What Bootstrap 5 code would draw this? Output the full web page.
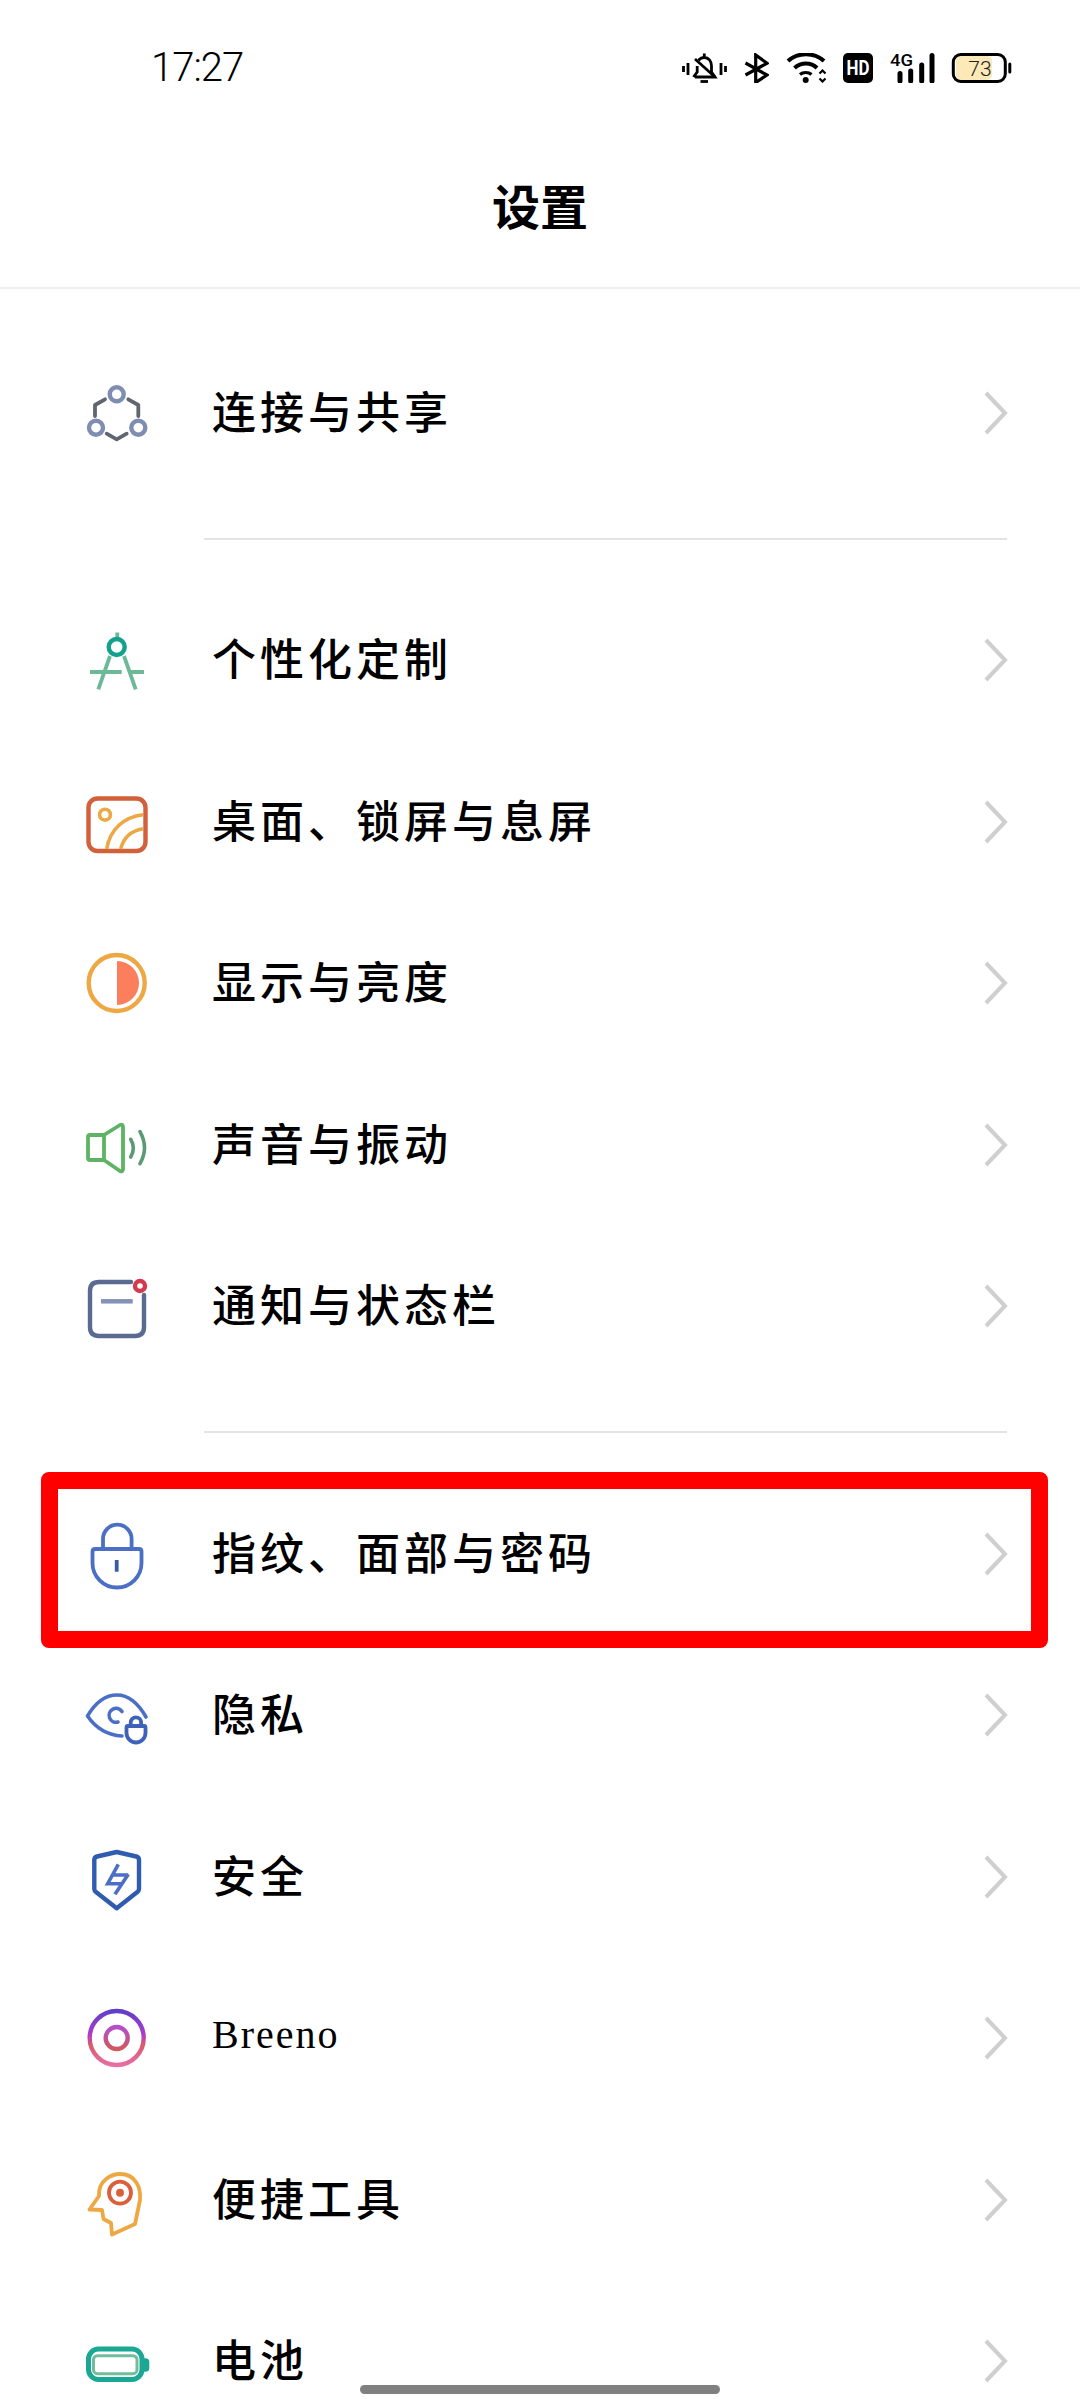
<!DOCTYPE html>
<html lang="zh-CN">
  <head>
    <meta charset="UTF-8" />
    <meta name="viewport" content="width=device-width, initial-scale=1.0" />
    <title>设置</title>
    <link
      rel="stylesheet"
      href="https://cdn.jsdelivr.net/npm/bootstrap@5.3.3/dist/css/bootstrap.min.css"
    />
    <style>
      body {
        background: #fff;
        color: #000;
        font-family: "Noto Sans CJK SC", sans-serif;
      }
      .phone-page {
        height: 2400px;
        overflow: hidden;
      }
      .page-head {
        height: 289px;
        border-bottom: 2px solid #f0f0f0;
      }
      .status-row {
        padding: 53px 68px 0 151px;
        height: 83px;
      }
      .status-time {
        font-family: Roboto, sans-serif;
        font-size: 40px;
        font-weight: 300;
        line-height: 30px;
        letter-spacing: -1px;
      }
      .status-icons {
        gap: 16px;
      }
      .page-title {
        font-size: 48px;
        font-weight: 700;
        line-height: 60px;
        margin: 91px 0 0;
      }
      .settings-list {
        padding-top: 43px;
        --bs-list-group-bg: transparent;
        --bs-list-group-border-width: 0;
      }
      .settings-item {
        height: 161.5px;
        padding: 0 72px 0 76px;
        color: #000;
      }
      .item-label {
        margin: 0 0 6px 56px;
        font-size: 44px;
        font-weight: 500;
        letter-spacing: 4px;
        line-height: 60px;
      }
      .item-latin {
        font-family: "Liberation Serif", serif;
        font-size: 40px;
        font-weight: 400;
        letter-spacing: 2px;
      }
      .item-rule {
        margin: 44px 73px 40px 204px;
        border-top: 2px solid #e3e3e3;
        opacity: 1;
      }
      .red-frame {
        position: absolute;
        left: 41px;
        top: -1px;
        width: 1007px;
        height: 176px;
        border: 17.5px solid #ff0000;
        border-radius: 8px;
      }
      .home-bar {
        position: absolute;
        left: 360px;
        top: 2385px;
        width: 360px;
        height: 9px;
        background: #808080;
        border-radius: 5px;
      }
      svg {
        display: block;
        flex-shrink: 0;
      }
      .ico {
        fill: none;
        stroke-width: 4.4;
        stroke-linecap: round;
        stroke-linejoin: round;
      }
      .chev {
        fill: none;
        stroke: #cfcfcf;
        stroke-width: 4;
      }
    </style>
    <script src="https://cdn.jsdelivr.net/npm/bootstrap@5.3.3/dist/js/bootstrap.bundle.min.js"></script>
  </head>

  <body>
    <div class="phone-page position-relative">
      <header class="page-head">
        <div class="status-row d-flex justify-content-between align-items-start">
          <span class="status-time">17:27</span>
          <div class="status-icons d-flex">
            <svg width="46" height="30" viewBox="0 0 46 30" fill="none" stroke="#000" stroke-width="2.8">
              <path d="M1.5 13v6M6 10v12M39 10v12M43.5 13v6" />
              <path d="M22.3 0.5v3M13 24h20l-3.5-5v-6c0-5-3-8.5-7.2-8.5-2.5 0-4.500 1.2-5.800 3M15.200 13v6L11.500 24" />
              <path d="M13 6l20 18" />
              <path d="M18.5 28.5h7.5" />
            </svg>
            <svg width="25" height="30" viewBox="0 0 25 30" fill="none" stroke="#000" stroke-width="3.2">
              <path d="M1.5 10L23 22L11.7 29.5V2L23 10.3L1.5 22" />
            </svg>
            <svg width="42" height="30" viewBox="0 0 42 30" fill="none" stroke="#000" stroke-width="4">
              <path d="M3 8C13 -1 29 -1 39 8" />
              <path d="M9.5 15C16 9 26 9 32 15" />
              <path d="M15 21.5C18 18.8 23.5 18.8 26.5 21.5" stroke-width="3.2" />
              <circle cx="20.7" cy="27" r="3" fill="#000" stroke="none" />
              <path d="M34.5 20.5l3-3 3 3M34.5 25.5l3 3 3-3" stroke-width="2.2" />
            </svg>
            <svg width="30" height="30" viewBox="0 0 30 30">
              <rect width="30" height="30" rx="5" fill="#000" />
              <text x="15" y="22" text-anchor="middle" textLength="23" lengthAdjust="spacingAndGlyphs" font-family="Roboto, sans-serif" font-weight="700" font-size="20" fill="#fff">HD</text>
            </svg>
            <svg width="46" height="30" viewBox="0 0 46 30">
              <text x="1" y="13" textLength="23" lengthAdjust="spacingAndGlyphs" font-family="Roboto, sans-serif" font-weight="500" font-size="16" fill="#000">4G</text>
              <path d="M11 20.5v7.5M21.7 18v10M32.7 12v16M43 2.5v25.5" stroke="#000" stroke-width="5" stroke-linecap="round" />
            </svg>
            <svg width="61" height="30" viewBox="0 0 61 30">
              <rect x="5" y="3" width="36" height="24" rx="5" fill="#fbe9b8" />
              <rect x="2.3" y="1.5" width="52" height="27" rx="7.5" fill="none" stroke="#000" stroke-width="3" />
              <rect x="57.3" y="9.5" width="3" height="11" rx="1.5" fill="#000" />
              <text x="29" y="22.5" text-anchor="middle" font-family="Roboto, sans-serif" font-weight="300" font-size="21" fill="#222">73</text>
            </svg>
          </div>
        </div>
        <h1 class="page-title text-center">设置</h1>
      </header>

      <div class="settings-list list-group list-group-flush" id="settingsList"></div>
      <div class="home-bar"></div>
    </div>

    <script>
      // icons drawn in an 80x80 box, row centre at y=40
      const icons = {
        link: `<g stroke="#5f6672" stroke-width="3.8"><path d="M29 26.3L19 32V43M52.3 26.3L62.3 32V43M30.7 60.7L40.7 66.3L50.7 60.7" /></g>
          <g stroke="#7f8db3"><circle cx="40.7" cy="21.3" r="7" /><circle cx="20" cy="54.7" r="7" /><circle cx="62.3" cy="54.7" r="7" /></g>`,
        compass: `<g stroke="#6cb997" stroke-width="3.8" stroke-linecap="butt"><path d="M41.3 12.5V18M34 36L22.3 69.3M48 36L59.7 69.3M14 52H45.7M52.3 52H68" /></g>
          <circle cx="40.7" cy="27" r="8" stroke="#13a08c" />`,
        wallpaper: `<rect x="12.5" y="16.5" width="57" height="52.5" rx="9" stroke="#d2603a" />
          <g stroke="#eda844" stroke-width="3.6" stroke-linecap="butt"><circle cx="29" cy="32.7" r="5.4" /><path d="M30.7 67C34 47 48 35 67 32.7M44.7 67C47 57 54 49 67 46.7" /></g>`,
        display: `<circle cx="40.7" cy="40" r="28" stroke="#eda844" />
          <path d="M41 18a22 22 0 0 1 0 44z" fill="#fb7f5c" />`,
        sound: `<path d="M14 30H28L44 20q3-1.500 3 2V64q0 3.500-3 2L28 55H14q-2 0-2-2V32q0-2 2-2zM28 30V55" stroke="#5eb365" stroke-width="3.8" />
          <path d="M54.7 34.300Q60 43 54.700 52M64 26.700Q73 43 64 58.700" stroke="#5a9a74" stroke-width="3.6" />`,
        notify: `<path d="M55 16H23q-9 0-9 9V61q0 9 9 9H59q9 0 9-9V29" stroke="#5a6a90" />
          <path d="M25 35.300H56.700" stroke="#8592b8" stroke-width="4.500" stroke-linecap="butt" />
          <circle cx="64" cy="20" r="5" stroke="#d43a4c" />`,
        lock: `<g stroke="#4a6fc4" stroke-width="3.800"><path d="M27 34V25a14.300 14.300 0 0 1 28.600 0V34" />
          <path d="M19.500 35H63q2.500 0 2.500 2.500V49a24.500 24.500 0 0 1-49 0V37.500q0-2.500 3-2.500z" /></g>
          <path d="M40.700 46V57.700" stroke="#3b5ba5" stroke-width="3.800" stroke-linecap="butt" />`,
        privacy: `<g stroke="#4a6fc4" stroke-width="3.600"><path d="M70 42C62 28 52 20 41 20C28 20 18 30 11.500 41C19 52 30 60 46 61" />
          <path d="M46 36.500A7 7 0 1 0 42 47" /></g>
          <g stroke="#3e62b8" stroke-width="3.800"><path d="M54.700 51V47.500a5.200 5.200 0 0 1 10.400 0V51" /><path d="M52 51H68a1.500 1.500 0 0 1 1.500 1.500V58a9.500 9.500 0 0 1-19 0V52.500A1.500 1.500 0 0 1 52 51z" /></g>`,
        shield: `<path d="M40.700 15L21 19.500q-2.700.700-2.700 3.500V52q0 2 2 3.300L40.700 71.300L61 55.300q2-1.300 2-3.300V23q0-2.800-2.700-3.500z" stroke="#2f5cb0" />
          <path d="M42.300 27.300L31.700 46.700H46.300M52.300 37.300L39 57.300M37.300 38H52.300" stroke="#4a6fc4" stroke-width="3.600" stroke-linecap="butt" stroke-linejoin="miter" />`,
        breeno: `<defs><linearGradient id="brA" gradientUnits="userSpaceOnUse" x1="0" y1="11" x2="0" y2="69"><stop offset="0" stop-color="#5a3fc8" /><stop offset=".45" stop-color="#b03ccc" /><stop offset=".6" stop-color="#d85a6a" /><stop offset="1" stop-color="#e870a8" /></linearGradient>
          <linearGradient id="brB" gradientUnits="userSpaceOnUse" x1="0" y1="28" x2="0" y2="52"><stop offset="0" stop-color="#b14fd0" /><stop offset="1" stop-color="#cf5a5a" /></linearGradient></defs>
          <circle cx="40.700" cy="40" r="27" stroke="url(#brA)" />
          <circle cx="40.700" cy="40" r="11" stroke="url(#brB)" />`,
        tools: `<path d="M13.500 49.500L23 36C22 20 36 14 44 14C60 14 65 28 64 40L59 64L36 74.500L35 63L27.500 59L26 50Z" stroke="#eda844" stroke-width="3.800" />
          <circle cx="44" cy="32.700" r="11" stroke="#d9603a" stroke-width="3.800" />
          <circle cx="44" cy="32.700" r="4" fill="#d9603a" />`,
        battery: `<rect x="12.500" y="28" width="53.500" height="30.500" rx="10" stroke="#1aa894" stroke-width="5" />
          <path d="M68 37.300h1.500q3.800 0 3.800 3.800v5.800q0 3.800-3.800 3.800H68z" fill="#1aa894" />
          <rect x="17.500" y="34.700" width="43.500" height="18" rx="4" stroke="#72bb9b" stroke-width="3" />`,
      };

      const items = [
        { name: "连接与共享", icon: "link", rule: true },
        { name: "个性化定制", icon: "compass" },
        { name: "桌面、锁屏与息屏", icon: "wallpaper" },
        { name: "显示与亮度", icon: "display" },
        { name: "声音与振动", icon: "sound" },
        { name: "通知与状态栏", icon: "notify", rule: true },
        { name: "指纹、面部与密码", icon: "lock", framed: true },
        { name: "隐私", icon: "privacy" },
        { name: "安全", icon: "shield" },
        { name: "Breeno", icon: "breeno", latin: true },
        { name: "便捷工具", icon: "tools" },
        { name: "电池", icon: "battery" },
      ];

      const settingsList = document.querySelector("#settingsList");

      for (let i = 0; i < items.length; i++) {
        const row = document.createElement("div");
        row.className = "settings-item list-group-item d-flex align-items-center position-relative";
        row.innerHTML = `
          <svg class="ico" width="80" height="80" viewBox="0 0 80 80">${icons[items[i].icon]}</svg>
          <span class="item-label ${items[i].latin ? "item-latin" : ""}">${items[i].name}</span>
          <svg class="chev ms-auto" width="24" height="44" viewBox="0 0 24 44"><path d="M2 2L21 22L2 42" /></svg>
          ${items[i].framed ? '<div class="red-frame"></div>' : ""}`;
        settingsList.appendChild(row);

        if (items[i].rule) {
          const rule = document.createElement("hr");
          rule.className = "item-rule";
          settingsList.appendChild(rule);
        }
      }
    </script>
  </body>
</html>
